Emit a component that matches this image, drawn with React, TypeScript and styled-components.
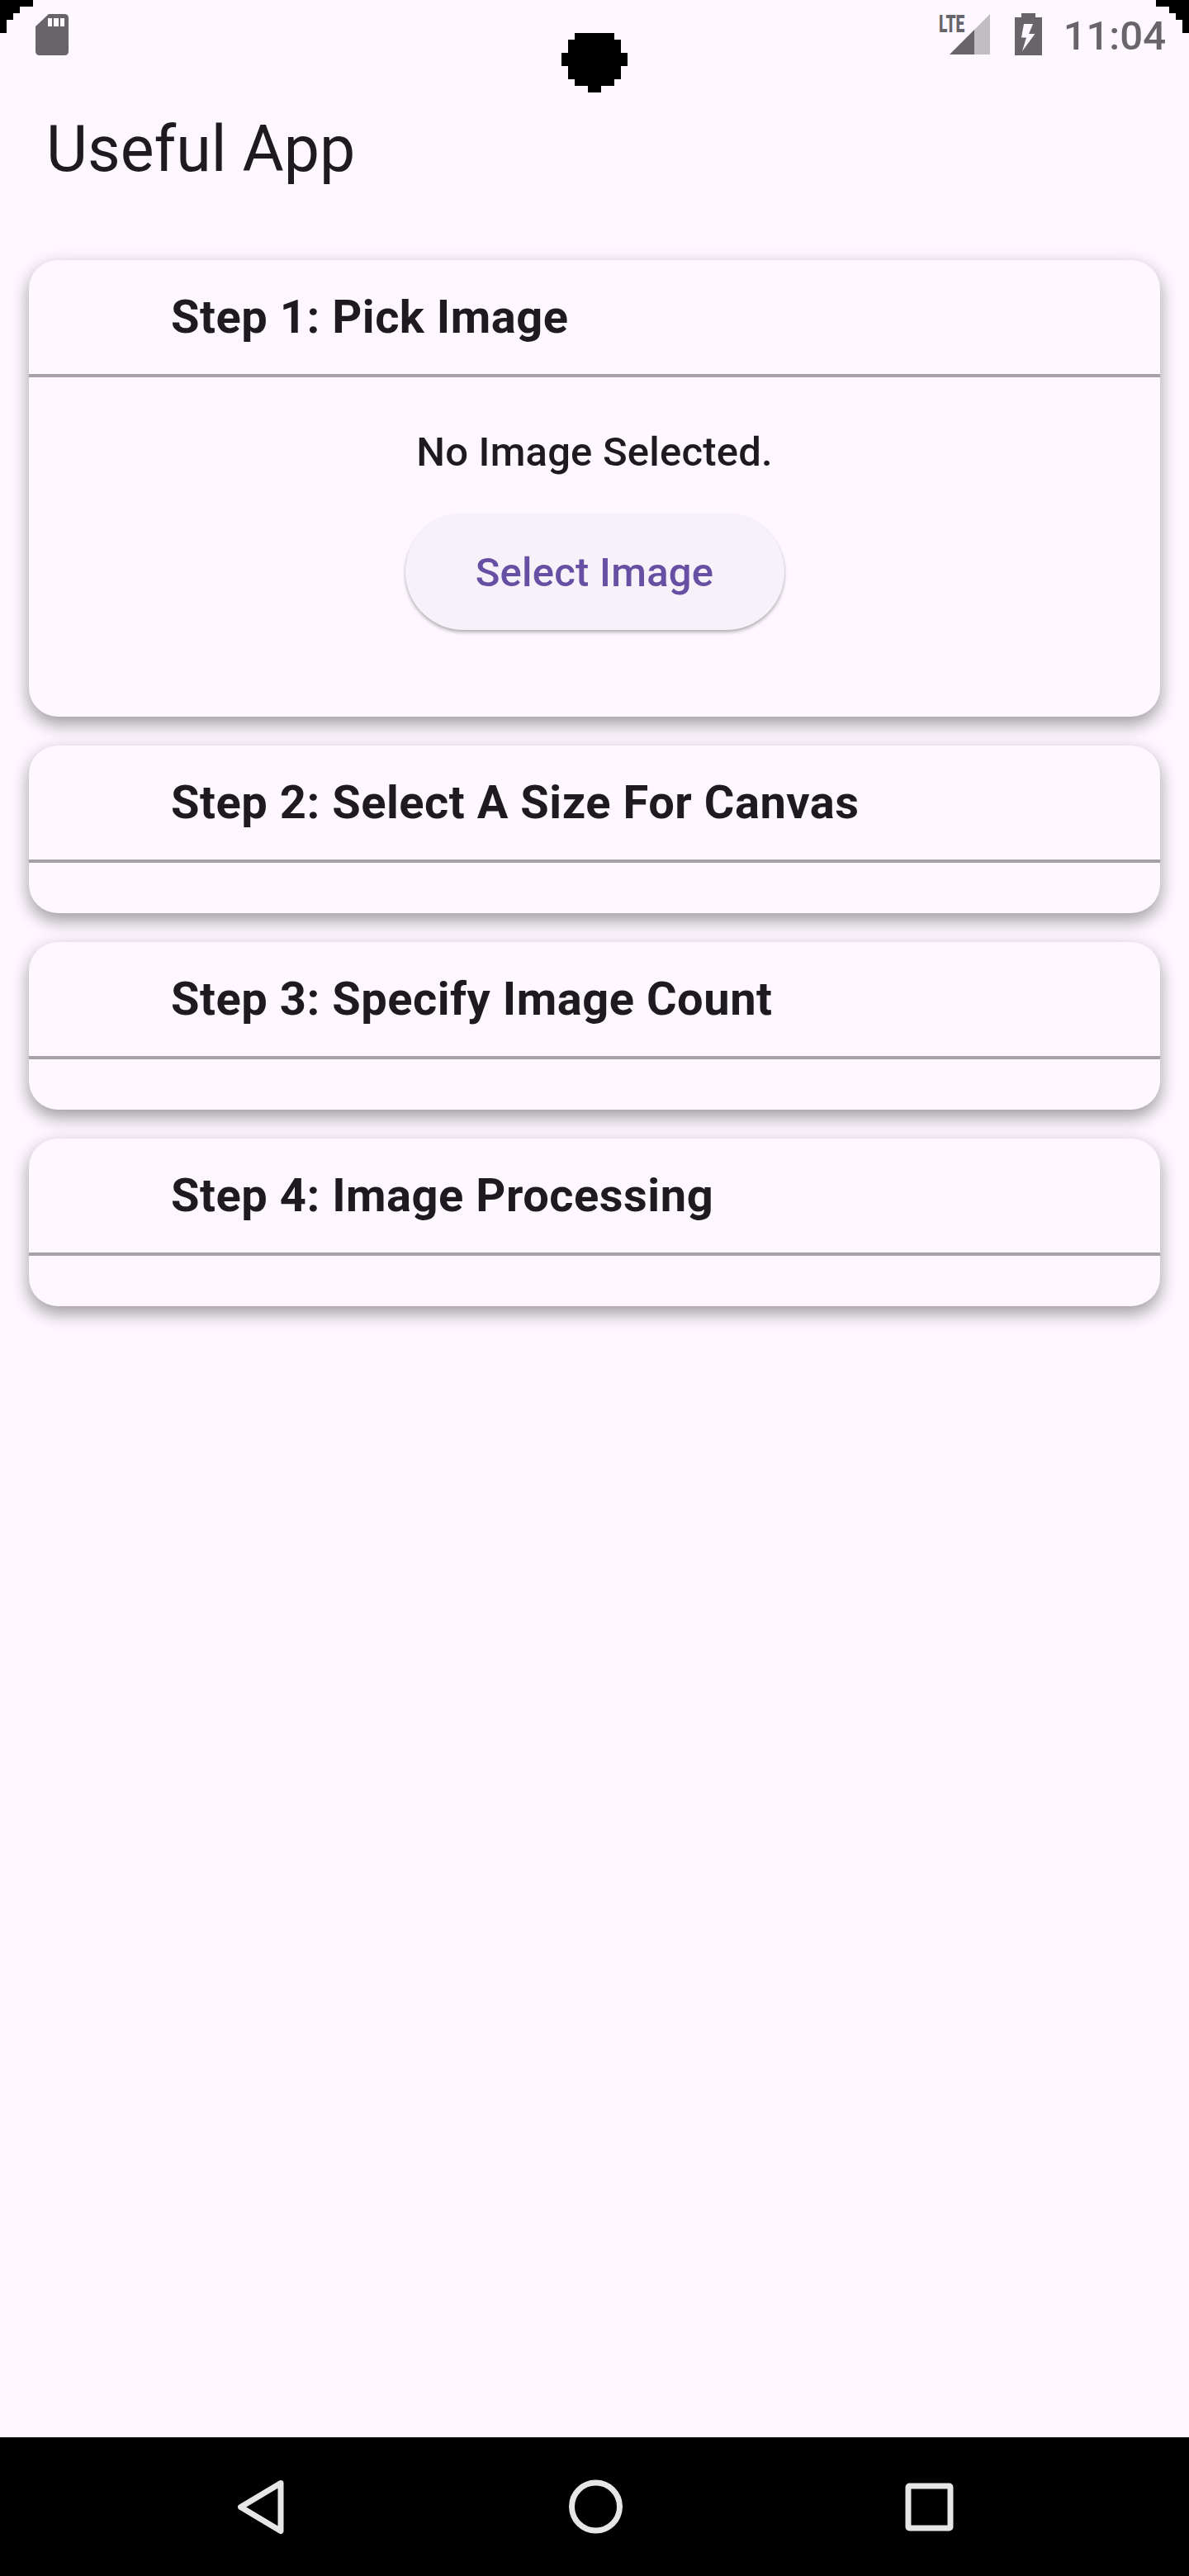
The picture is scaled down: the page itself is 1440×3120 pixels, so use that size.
import React from "react";
import styled, { createGlobalStyle } from "styled-components";

const Global = createGlobalStyle`
  *, *::before, *::after { box-sizing: border-box; }
  html, body { margin: 0; background: #fef7ff; }
  body { font-family: Roboto, "Noto Sans", sans-serif; color: #1d1b20; }
`;

const Screen = styled.div`
  position: relative;
  display: flex;
  flex-direction: column;
  width: 1440px;
  height: 3120px;
  overflow: hidden;
  background: #fef7ff;
`;

const StatusBar = styled.header`
  display: flex;
  justify-content: space-between;
  height: 84px;
  padding: 15px 28px 0 43px;
  color: #67646a;
`;

const StatusGroup = styled.div`
  display: flex;
  align-items: flex-start;
`;

const StatusIcon = styled.svg<{ $gap?: number }>`
  display: block;
  margin-right: ${(p) => p.$gap ?? 0}px;
`;

const Signal = styled.div`
  display: flex;
  align-items: flex-start;
  margin-right: 30px;
`;

const NetworkType = styled.span`
  width: 13px;
  margin-top: 2px;
  font: 900 29px/24px Roboto, sans-serif;
  white-space: nowrap;
  transform: scaleX(0.66);
  transform-origin: 0 0;
`;

const Clock = styled.time`
  font-size: 49px;
  font-weight: 500;
  line-height: 58px;
`;

const Cutout = styled.svg<{ $x: number; $y: number }>`
  position: absolute;
  left: ${(p) => p.$x}px;
  top: ${(p) => p.$y}px;
`;

const AppBar = styled.div`
  display: flex;
  align-items: center;
  height: 196px;
  padding: 0 56px;
`;

const Title = styled.h1`
  margin: 0 0 2px;
  font-size: 77px;
  font-weight: 400;
  line-height: 98px;
`;

const Steps = styled.main`
  display: flex;
  flex: 1;
  flex-direction: column;
  gap: 35px;
  padding: 35px;
`;

const Card = styled.section<{ $height: number }>`
  flex: none;
  height: ${(p) => p.$height}px;
  border-radius: 35px;
  background: #fef7ff;
  box-shadow: 0 10px 20px rgba(0, 0, 0, 0.3), 0 4px 24px rgba(0, 0, 0, 0.1);
`;

const CardHeader = styled.div`
  display: flex;
  align-items: center;
  height: 142px;
  padding-left: 172px;
  border-bottom: 4px solid #a5a1a7;
`;

const CardTitle = styled.h2`
  margin: 0;
  font-size: 56px;
  font-weight: 700;
  line-height: 84px;
  letter-spacing: 0.53px;
`;

const CardBody = styled.div`
  display: flex;
  flex-direction: column;
  align-items: center;
  padding-top: 56px;
`;

const Message = styled.p`
  margin: 0 0 39px;
  font-size: 49px;
  font-weight: 500;
  line-height: 70px;
  letter-spacing: 0.2px;
`;

const PillButton = styled.button`
  width: 459px;
  height: 141px;
  padding: 3px 0 0;
  border: 0;
  border-radius: 71px;
  background: #f7f2fa;
  box-shadow: 0 3px 4px rgba(0, 0, 0, 0.26), 0 1px 3px rgba(0, 0, 0, 0.08);
  color: #6750a4;
  font: 500 49px/70px Roboto, sans-serif;
  letter-spacing: 0.25px;
`;

const NavBar = styled.nav`
  display: flex;
  align-items: center;
  justify-content: space-between;
  height: 168px;
  padding: 0 284px 0 285px;
  background: #000;
`;

const NavIcon = styled.svg`
  fill: none;
  stroke: #e6e6e6;
  stroke-width: 7px;
  stroke-linejoin: round;
`;

const steps = [
  { title: "Step 1: Pick Image", height: 553, picker: true },
  { title: "Step 2: Select A Size For Canvas", height: 203 },
  { title: "Step 3: Specify Image Count", height: 203 },
  { title: "Step 4: Image Processing", height: 203 },
];

export default function App() {
  return (
    <>
      <Global />
      <Screen>
        <StatusBar>
          <StatusIcon width="40" height="54" viewBox="0 0 40 54">
            <path
              fill="currentColor"
              fillRule="evenodd"
              d="M16 2h19q5 0 5 5v40q0 5-5 5H5q-5 0-5-5V17zM15 7v10h5V7zm7 0v10h6V7zm8 0v10h5V7z"
            />
          </StatusIcon>
          <StatusGroup>
            <Signal>
              <NetworkType>LTE</NetworkType>
              <svg width="49" height="52" viewBox="0 0 49 52">
                <path fill="#c1bdc3" d="M49 2v49H29V22z" />
                <path fill="currentColor" d="M30 21v30H0z" />
              </svg>
            </Signal>
            <StatusIcon $gap={26} width="33" height="52" viewBox="0 0 33 52">
              <path
                fill="currentColor"
                fillRule="evenodd"
                d="M8 1h17v5h8v46H0V6h8zM11 14L8 30.500h6L9 47l15.500-21h-7.500l5-12z"
              />
            </StatusIcon>
            <Clock>11:04</Clock>
          </StatusGroup>
        </StatusBar>
        <Cutout $x={0} $y={0} width="40" height="40">
          <path d="M0 0h40v8H24v8h-8v8H8v16H0z" />
        </Cutout>
        <Cutout $x={1400} $y={0} width="40" height="40">
          <path d="M40 0H0v8h16v8h8v8h8v16h8z" />
        </Cutout>
        <Cutout $x={680} $y={40} width="80" height="72">
          <path d="M16 0h48v8h8v16h8v16h-8v16h-8v8H48v8H32v-8H16v-8H8V40H0V24h8V8h8z" />
        </Cutout>
        <AppBar>
          <Title>Useful App</Title>
        </AppBar>
        <Steps>
          {steps.map((step) => (
            <Card key={step.title} $height={step.height}>
              <CardHeader>
                <CardTitle>{step.title}</CardTitle>
              </CardHeader>
              {step.picker && (
                <CardBody>
                  <Message>No Image Selected.</Message>
                  <PillButton>Select Image</PillButton>
                </CardBody>
              )}
            </Card>
          ))}
        </Steps>
        <NavBar>
          <NavIcon width="62" height="72" viewBox="0 0 62 72">
            <path d="M55 7.500L6.500 36.500l48.500 29z" />
          </NavIcon>
          <NavIcon width="66" height="66" viewBox="0 0 66 66">
            <circle cx="32.500" cy="33" r="29" />
          </NavIcon>
          <NavIcon width="60" height="60" viewBox="0 0 60 60">
            <rect x="4" y="5" width="51" height="51" rx="1.500" />
          </NavIcon>
        </NavBar>
      </Screen>
    </>
  );
}
